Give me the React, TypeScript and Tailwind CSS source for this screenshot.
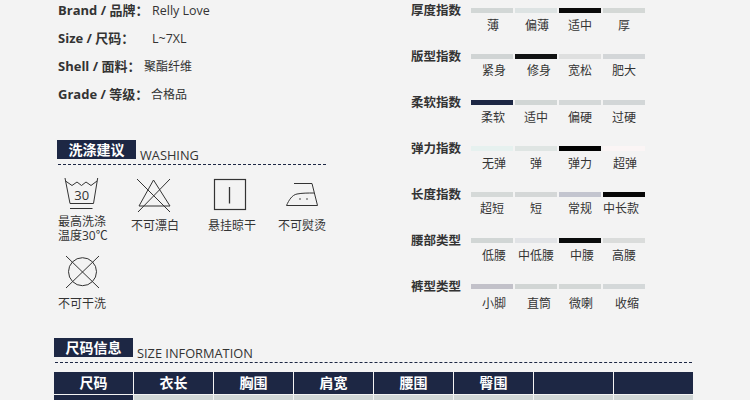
import React from 'react';

const font = "font-['Open_Sans','Noto_Sans_CJK_SC',sans-serif]";

const specs = [
  { label: 'Brand / 品牌：', width: 'w-[94px]', value: 'Relly Love', size: 'text-[12.5px]' },
  { label: 'Size / 尺码：', width: 'w-[94px]', value: 'L~7XL', size: 'text-[12.5px]' },
  { label: 'Shell / 面料：', width: 'w-[86px]', value: '聚酯纤维', size: 'text-[12px]' },
  { label: 'Grade / 等级：', width: 'w-[93px]', value: '合格品', size: 'text-[12px]' },
];

const indexes = [
  {
    name: '厚度指数',
    gap: 'mt-[6px]',
    items: [
      { text: '薄', bar: 'bg-[#d2d7d6]', shift: 'pl-0.5' },
      { text: '偏薄', bar: 'bg-[#dde3e3]', shift: 'pl-0.5' },
      { text: '适中', bar: 'bg-[#0a0a0a]', shift: '' },
      { text: '厚', bar: 'bg-[#d4d8d6]', shift: '' },
    ],
  },
  {
    name: '版型指数',
    gap: 'mt-[5px]',
    items: [
      { text: '紧身', bar: 'bg-[#d0d4d4]', shift: 'pl-1' },
      { text: '修身', bar: 'bg-[#111213]', shift: 'pl-1.5' },
      { text: '宽松', bar: 'bg-[#dedfdf]', shift: '' },
      { text: '肥大', bar: 'bg-[#d3d6d8]', shift: '' },
    ],
  },
  {
    name: '柔软指数',
    gap: 'mt-[6px]',
    items: [
      { text: '柔软', bar: 'bg-[#1d2744]', shift: 'pl-0.5' },
      { text: '适中', bar: 'bg-[#d1d6d5]', shift: '' },
      { text: '偏硬', bar: 'bg-[#d4d8d8]', shift: '' },
      { text: '过硬', bar: 'bg-[#d2d6d7]', shift: '' },
    ],
  },
  {
    name: '弹力指数',
    gap: 'mt-[6px]',
    items: [
      { text: '无弹', bar: 'bg-[#e6f1ef]', shift: 'pl-1' },
      { text: '弹', bar: 'bg-[#dfe5e3]', shift: '' },
      { text: '弹力', bar: 'bg-[#020202]', shift: '' },
      { text: '超弹', bar: 'bg-[#fbf5f5]', shift: 'pl-0.5' },
    ],
  },
  {
    name: '长度指数',
    gap: 'mt-[5px]',
    items: [
      { text: '超短', bar: 'bg-[#d5d9d8]', shift: '' },
      { text: '短', bar: 'bg-[#d4d7d7]', shift: '' },
      { text: '常规', bar: 'bg-[#c3c5cf]', shift: '' },
      { text: '中长款', bar: 'bg-[#060606]', shift: 'pr-2' },
    ],
  },
  {
    name: '腰部类型',
    gap: 'mt-[6px]',
    items: [
      { text: '低腰', bar: 'bg-[#d1d6d5]', shift: 'pl-1' },
      { text: '中低腰', bar: 'bg-[#e1e3e6]', shift: '' },
      { text: '中腰', bar: 'bg-[#0a0c0c]', shift: 'pl-1' },
      { text: '高腰', bar: 'bg-[#dadcdb]', shift: '' },
    ],
  },
  {
    name: '裤型类型',
    gap: 'mt-[8px]',
    items: [
      { text: '小脚', bar: 'bg-[#c2c1c9]', shift: 'pl-1' },
      { text: '直筒', bar: 'bg-[#d1d5d4]', shift: 'pl-1.5' },
      { text: '微喇', bar: 'bg-[#d3d7d6]', shift: 'pl-0.5' },
      { text: '收缩', bar: 'bg-[#d4d8d9]', shift: 'pl-1.5' },
    ],
  },
];

const columns = ['尺码', '衣长', '胸围', '肩宽', '腰围', '臀围', '', ''];

function SectionTitle({ zh, en, className }: { zh: string; en: string; className: string }) {
  return (
    <div className={className}>
      <div className="flex items-end">
        <div className="w-[79px] h-[19px] bg-[#1d2744] text-white text-[14px] font-bold leading-[19px] text-center">{zh}</div>
        <div className="ml-1 text-[12.8px] leading-[14px] -mb-[3px] text-[#333]">{en}</div>
      </div>
    </div>
  );
}

function WashIcon() {
  return (
    <svg width="48" height="36" viewBox="0 0 48 36" fill="none" stroke="#333" strokeWidth="1">
      <path d="M7 2 L12 27.5 H35.5 L39.7 2" />
      <path d="M7.5 5 L14 9.5 L19 6 L23.5 9.5 L28 6 L33 9.5 L39 5" />
      <path d="M12 32.5 H34.5" />
      <text x="23.7" y="24" textAnchor="middle" fontSize="13" fill="#333" stroke="none" fontFamily="Open Sans, sans-serif">30</text>
    </svg>
  );
}

function NoBleachIcon() {
  return (
    <svg width="48" height="37" viewBox="0 0 48 37" fill="none" stroke="#333" strokeWidth="1">
      <path d="M22.5 4 L8 30 H39 Z" />
      <path d="M6 3 L39 36 M39 3 L7 36" />
    </svg>
  );
}

function HangIcon() {
  return (
    <svg width="48" height="36" viewBox="0 0 48 36" fill="none" stroke="#333">
      <rect x="6.5" y="3.5" width="31" height="30" strokeWidth="1.2" />
      <path d="M21.5 11 V27.5" strokeWidth="1.3" />
    </svg>
  );
}

function IronIcon() {
  return (
    <svg width="48" height="36" viewBox="0 0 48 36" fill="none" stroke="#333" strokeWidth="1">
      <path d="M16 7.5 H34 L39.5 29.5 H8.5 C11 24 14 19 19 18 C24 17 30 17 36 17" />
      <circle cx="22" cy="23" r="0.8" fill="#333" stroke="none" />
      <circle cx="29" cy="23" r="0.8" fill="#333" stroke="none" />
    </svg>
  );
}

function NoDryIcon() {
  return (
    <svg width="48" height="36" viewBox="0 0 48 36" fill="none" stroke="#333" strokeWidth="1">
      <circle cx="24.5" cy="17.7" r="14" />
      <path d="M8 2 L41 34 M41 2 L8 34" />
    </svg>
  );
}

const care = [
  { icon: <WashIcon />, text: ['最高洗涤', '温度30℃'], gap: 'mt-[3px]' },
  { icon: <NoBleachIcon />, text: ['不可漂白'], gap: 'mt-[6px]' },
  { icon: <HangIcon />, text: ['悬挂晾干'], gap: 'mt-[7px]' },
  { icon: <IronIcon />, text: ['不可熨烫'], gap: 'mt-[7px]' },
];

export default function App() {
  return (
    <div className={`w-[750px] h-[400px] overflow-hidden bg-[#f3f3f3] text-[#333] text-[12px] ${font}`}>
      <div className="flex h-[338px]">
        <div className="w-[411px] pl-[58px] -mt-[3px]">
          {specs.map((s) => (
            <div key={s.label} className="flex h-7 leading-7">
              <div className={`${s.width} -mt-px font-bold text-[13px] whitespace-nowrap`}>{s.label}</div>
              <div className={s.size}>{s.value}</div>
            </div>
          ))}
          <SectionTitle zh="洗涤建议" en="WASHING" className="mt-[31px] -ml-px" />
          <div className="mt-[5px] w-[268px] border-t border-dashed border-[#1d2744]" />
          <div className="mt-[11px] grid grid-cols-[73px_77px_70px_48px] gap-y-[4px]">
            {care.map((c) => (
              <div key={c.text[0]} className="w-[48px] h-[74px]">
                {c.icon}
                <div className={`${c.gap} leading-[14px] whitespace-nowrap text-center`}>
                  {c.text.map((t) => (
                    <div key={t}>{t}</div>
                  ))}
                </div>
              </div>
            ))}
            <div className="w-[48px]">
              <NoDryIcon />
              <div className="mt-[7px] leading-[14px] whitespace-nowrap text-center">不可干洗</div>
            </div>
          </div>
        </div>
        <div className="pt-[3px]">
          {indexes.map((row) => (
            <div key={row.name} className="flex h-[46px]">
              <div className="w-[60px] font-bold text-[12.5px] leading-[15px]">{row.name}</div>
              <div className="grid grid-cols-[repeat(4,42px)] gap-x-[2px]">
                {row.items.map((item) => (
                  <div key={item.text + item.bar}>
                    <div className={`h-[5px] mt-[5px] ${item.bar}`} />
                    <div className={`${row.gap} leading-[14px] text-center whitespace-nowrap ${item.shift}`}>{item.text}</div>
                  </div>
                ))}
              </div>
            </div>
          ))}
        </div>
      </div>
      <SectionTitle zh="尺码信息" en="SIZE INFORMATION" className="ml-[54px]" />
      <div className="ml-[55px] mt-[5px] w-[637px] border-t border-dashed border-[#1d2744]" />
      <div className="ml-[54px] mt-[9px] grid grid-cols-[repeat(8,79px)] gap-[1px]">
        {columns.map((c, i) => (
          <div key={i} className="h-[22px] bg-[#1d2744] text-white text-[14px] font-bold leading-[22px] text-center">{c}</div>
        ))}
        {columns.map((c, i) => (
          <div key={i} className={`h-[22px] ${i === 0 ? 'bg-[#1d2744]' : 'bg-[#d0d6d6]'}`} />
        ))}
      </div>
    </div>
  );
}
